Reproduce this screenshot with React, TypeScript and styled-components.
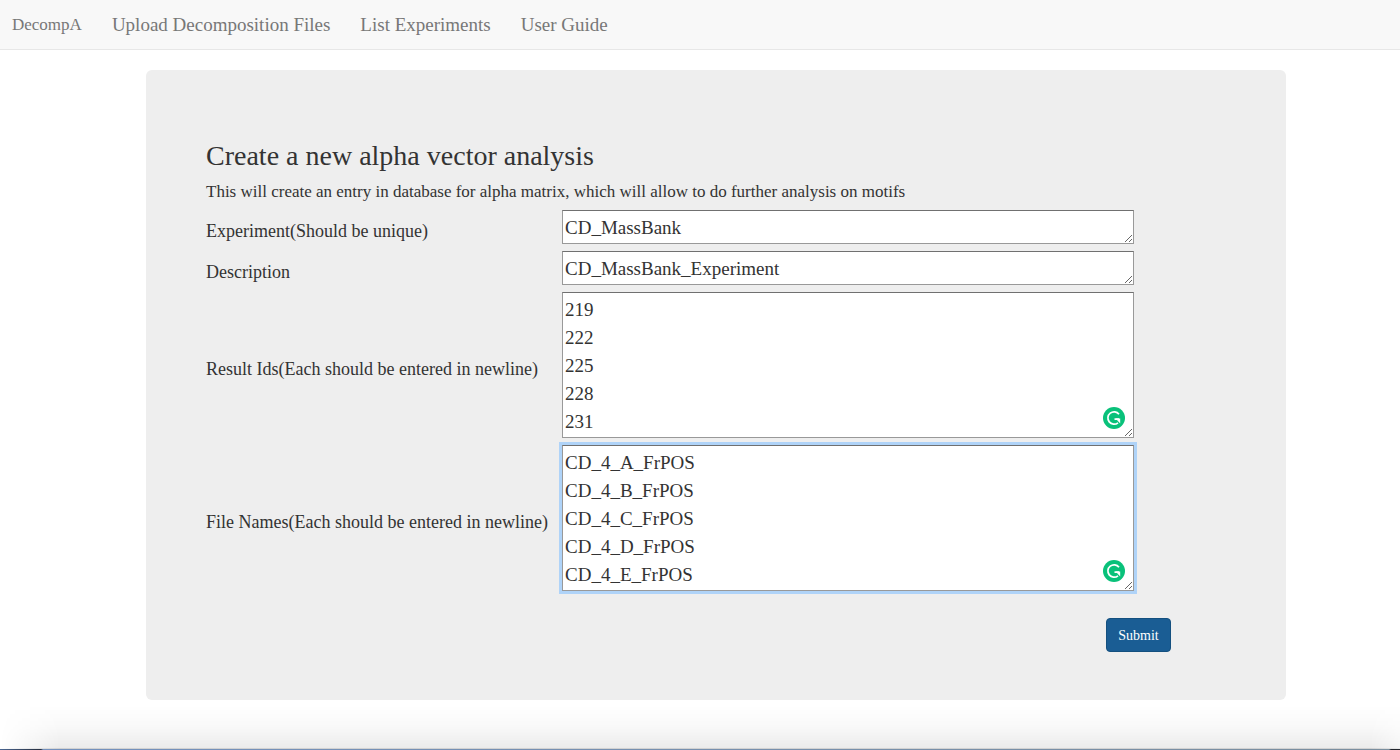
import React from 'react';
import styled, { createGlobalStyle } from 'styled-components';

const GlobalStyle = createGlobalStyle`
  * { box-sizing: border-box; }
  html, body { margin: 0; }
  body {
    background: #fff;
    color: #333;
    font-family: "Liberation Serif", "Times New Roman", serif;
    font-size: 18px;
    line-height: 28px;
  }
`;

const Page = styled.div`
  position: relative;
  display: flex;
  flex-direction: column;
  min-height: 100vh;
`;

const Navbar = styled.nav`
  display: flex;
  align-items: center;
  gap: 30px;
  height: 50px;
  padding: 0 12px;
  background: #f8f8f8;
  border-bottom: 1px solid #e7e7e7;
`;

const NavLink = styled.a<{ $brand?: boolean }>`
  color: #777;
  font-size: ${({ $brand }) => ($brand ? 17 : 19)}px;
  text-decoration: none;
  white-space: nowrap;
`;

const Main = styled.main`
  padding: 20px 0 50px 32px;
`;

const Panel = styled.section`
  max-width: 1140px;
  min-height: 630px;
  margin: 0 auto;
  padding: 68px 60px 48px;
  background: #eee;
  border-radius: 6px;
`;

const Title = styled.h1`
  margin: 0;
  font-size: 28px;
  font-weight: 400;
  line-height: 36px;
`;

const Intro = styled.p`
  margin: 0;
  padding: 6px 0;
  font-size: 17px;
  line-height: 24px;
`;

const Form = styled.form`
  max-width: 965px;
`;

const Fields = styled.div`
  display: grid;
  grid-template-columns: 356px minmax(0, 572px);
`;

const Label = styled.label`
  align-self: center;
  white-space: nowrap;
`;

const Field = styled.div`
  position: relative;
  padding-bottom: 7px;
`;

const TextArea = styled.textarea`
  display: block;
  width: 100%;
  margin: 0;
  padding: 3px 2px 1px;
  border: 1px solid #999;
  border-top-color: #707070;
  border-radius: 0;
  background: #fff;
  color: #333;
  font: inherit;
  font-size: 19px;
  line-height: 28px;
  overflow: hidden;
  resize: both;

  &:focus {
    outline: 3px solid #afd3f8;
    outline-offset: 0;
  }
`;

const Badge = styled.svg`
  position: absolute;
  right: 9px;
  bottom: 16px;
  width: 22px;
  height: 22px;
`;

const Actions = styled.div`
  display: flex;
  justify-content: flex-end;
  padding-top: 20px;
`;

const SubmitButton = styled.button`
  min-width: 65px;
  height: 34px;
  padding: 2px 11px 0;
  border: 1px solid #14507f;
  border-radius: 4px;
  background: #1a5d94;
  color: #fff;
  font: inherit;
  font-size: 14px;
`;

const BottomEdge = styled.div`
  position: absolute;
  left: 0;
  right: 0;
  bottom: 0;
  pointer-events: none;
`;

const Shade = styled.div`
  height: 44px;
  border-bottom: 1px solid rgba(0, 0, 0, 0.18);
  background: linear-gradient(to bottom, rgba(0, 0, 0, 0), rgba(0, 0, 0, 0.025) 50%, rgba(0, 0, 0, 0.08));
  mask-image: linear-gradient(to right, transparent, #000 60px, #000 calc(100% - 30px), rgba(0, 0, 0, 0.5));
`;

const EdgeLine = styled.div`
  height: 1px;
  background: linear-gradient(
    to right,
    #4a6590,
    #262f40 41px,
    #7390bd 43px,
    #7a8e9e calc(100% - 11px),
    #20242c calc(100% - 9px)
  );
`;

const GrammarBadge = () => (
  <Badge viewBox="0 0 22 22" aria-hidden="true">
    <circle cx="11" cy="11" r="11" fill="#09c17a" />
    <path d="M16 7.2A6.2 6.2 0 1 0 15 15.8M11.5 12.2H16" fill="none" stroke="#fff" strokeWidth="1.7" />
    <path d="M12.6 11.4H17.2V16.6Z" fill="#fff" />
  </Badge>
);

type FieldSpec = {
  id: string;
  label: string;
  value: string;
  rows: number;
  badge?: boolean;
  focused?: boolean;
};

const fields: FieldSpec[] = [
  { id: 'experiment', label: 'Experiment(Should be unique)', value: 'CD_MassBank', rows: 1 },
  { id: 'description', label: 'Description', value: 'CD_MassBank_Experiment', rows: 1 },
  {
    id: 'result-ids',
    label: 'Result Ids(Each should be entered in newline)',
    value: '219\n222\n225\n228\n231',
    rows: 5,
    badge: true,
  },
  {
    id: 'file-names',
    label: 'File Names(Each should be entered in newline)',
    value: 'CD_4_A_FrPOS\nCD_4_B_FrPOS\nCD_4_C_FrPOS\nCD_4_D_FrPOS\nCD_4_E_FrPOS',
    rows: 5,
    badge: true,
    focused: true,
  },
];

export default function App() {
  return (
    <>
      <GlobalStyle />
      <Page>
        <Navbar>
          <NavLink href="#home" $brand>DecompA</NavLink>
          <NavLink href="#upload">Upload Decomposition Files</NavLink>
          <NavLink href="#experiments">List Experiments</NavLink>
          <NavLink href="#guide">User Guide</NavLink>
        </Navbar>
        <Main>
          <Panel>
            <Title>Create a new alpha vector analysis</Title>
            <Intro>This will create an entry in database for alpha matrix, which will allow to do further analysis on motifs</Intro>
            <Form onSubmit={(event) => event.preventDefault()}>
              <Fields>
                {fields.map((field) => (
                  <React.Fragment key={field.id}>
                    <Label htmlFor={field.id}>{field.label}</Label>
                    <Field>
                      <TextArea
                        id={field.id}
                        rows={field.rows}
                        defaultValue={field.value}
                        autoFocus={field.focused}
                        spellCheck={false}
                      />
                      {field.badge && <GrammarBadge />}
                    </Field>
                  </React.Fragment>
                ))}
              </Fields>
              <Actions>
                <SubmitButton type="submit">Submit</SubmitButton>
              </Actions>
            </Form>
          </Panel>
        </Main>
        <BottomEdge>
          <Shade />
          <EdgeLine />
        </BottomEdge>
      </Page>
    </>
  );
}
